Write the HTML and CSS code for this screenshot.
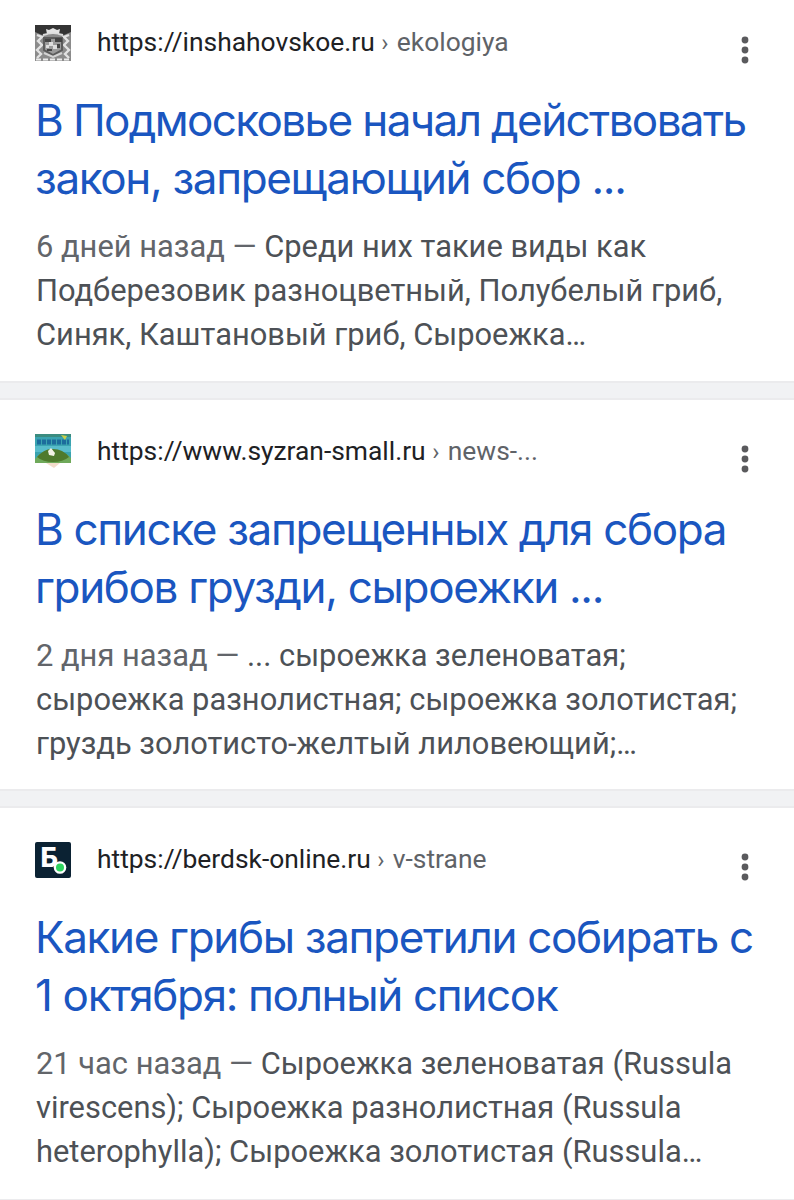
FILE: index.html
```
<!DOCTYPE html>
<html lang="ru">
<head>
  <meta charset="UTF-8">
  <meta name="viewport" content="width=device-width, initial-scale=1.0">
  <title>Результаты поиска</title>
  <link rel="stylesheet" href="styles.css">
</head>
<body>
  <main class="results">
    <article class="result">
      <header class="source">
        <svg class="favicon soft" viewBox="0 0 36 36">
          <rect width="36" height="36" fill="#8b8b8b"/>
          <path d="M0 0h36v7l-7 3H7L0 7z" fill="#343434"/>
          <path d="M11 4l3 1 4-2 4 2 3-1-1 5H12z" fill="#e4e4e4"/>
          <path d="M2 10l5 2-4 4 4 4-5 5 4 4-4 4M34 10l-5 2 4 4-4 4 5 5-4 4 4 4" fill="none" stroke="#e2e2e2" stroke-width="2.4"/>
          <path d="M8 10q10-3 20 0" fill="none" stroke="#ddd" stroke-width="2"/>
          <path d="M9 13h18v12l-9 5-9-5z" fill="#9a9a9a" stroke="#5c5c5c" stroke-width="2"/>
          <path d="M10 14h6v3h-6zM20 13h7v4h-7zM12 24h5v2h-5zM22 19h3v4h-3z" fill="#444"/>
          <path d="M14 17h4v4h-4zM18 20h4v4h-4zM11 20h3v3h-3z" fill="#ddd"/>
          <path d="M9 28l9 4 9-4" fill="none" stroke="#d4d4d4" stroke-width="2"/>
          <path d="M1 34.5h34" stroke="#ececec" stroke-width="2" stroke-dasharray="5 2"/>
        </svg>
        <div class="url">https://inshahovskoe.ru<span class="path"> <span class="sep">›</span> ekologiya</span></div>
        <svg class="menu" viewBox="0 0 8 28"><circle cx="4" cy="4" r="3.4"/><circle cx="4" cy="14" r="3.4"/><circle cx="4" cy="24" r="3.4"/></svg>
      </header>
      <h3 class="title"><span class="line tight">В Подмосковье начал действовать</span><span class="line">закон, запрещающий сбор ...</span></h3>
      <p class="snippet"><span class="line"><span class="date">6 дней назад —</span> Среди них такие виды как</span><span class="line">Подберезовик разноцветный, Полубелый гриб,</span><span class="line">Синяк, Каштановый гриб, Сыроежка…</span></p>
    </article>

    <article class="result">
      <header class="source">
        <svg class="favicon soft" viewBox="0 0 36 36">
          <rect width="36" height="29" fill="#3aa3b0"/>
          <rect width="36" height="3" fill="#3b8c80"/>
          <path d="M2 8h32" stroke="#1c6c9c" stroke-width="5" stroke-dasharray="4 1"/>
          <rect y="12" width="36" height="6" fill="#58bccb"/>
          <path d="M0 29v-4q8-10 18-9 10 0 18 8v5z" fill="#6fa95a"/>
          <path d="M2 23q8-9 16-8 10 0 16 8-6 5-16 5T2 23z" fill="#4f7a2c"/>
          <path d="M13 17l3-3 4 5-1 3-5-1z" fill="#f2f2e4"/>
          <path d="M26 1l6 1-2 4z" fill="#c8cf4a"/>
          <path d="M11 29h14l-6 5z" fill="#f3dccb"/>
        </svg>
        <div class="url">https://www.syzran-small.ru<span class="path"> <span class="sep">›</span> news-...</span></div>
        <svg class="menu" viewBox="0 0 8 28"><circle cx="4" cy="4" r="3.4"/><circle cx="4" cy="14" r="3.4"/><circle cx="4" cy="24" r="3.4"/></svg>
      </header>
      <h3 class="title"><span class="line">В списке запрещенных для сбора</span><span class="line">грибов грузди, сыроежки ...</span></h3>
      <p class="snippet"><span class="line"><span class="date">2 дня назад —</span> ... сыроежка зеленоватая;</span><span class="line">сыроежка разнолистная; сыроежка золотистая;</span><span class="line">груздь золотисто-желтый лиловеющий;…</span></p>
    </article>

    <article class="result">
      <header class="source">
        <svg class="favicon" viewBox="0 0 36 36">
          <rect width="36" height="36" rx="2" fill="#0b2233"/>
          <text class="favicon-letter" x="5.5" y="25">Б</text>
          <circle cx="25" cy="25.5" r="6.3" fill="#fff"/>
          <circle cx="25" cy="25.5" r="4" fill="#2fd45f"/>
        </svg>
        <div class="url">https://berdsk-online.ru<span class="path"> <span class="sep">›</span> v-strane</span></div>
        <svg class="menu" viewBox="0 0 8 28"><circle cx="4" cy="4" r="3.4"/><circle cx="4" cy="14" r="3.4"/><circle cx="4" cy="24" r="3.4"/></svg>
      </header>
      <h3 class="title"><span class="line">Какие грибы запретили собирать с</span><span class="line">1 октября: полный список</span></h3>
      <p class="snippet"><span class="line"><span class="date">21 час назад —</span> Сыроежка зеленоватая (Russula</span><span class="line">virescens); Сыроежка разнолистная (Russula</span><span class="line">heterophylla); Сыроежка золотистая (Russula…</span></p>
    </article>
  </main>
</body>
</html>
```
FILE: styles.css
```
* {
  box-sizing: border-box;
}

body {
  margin: 0;
  height: 1200px;
  overflow: hidden;
  background-color: #f1f2f4;
  font-family: Roboto, "Noto Sans", sans-serif;
}

.results {
  display: flex;
  flex-direction: column;
  gap: 15px;
}

.result {
  height: 393px;
  padding: 34px 36px 0;
  background-color: #fff;
  border-top: 2px solid #ebebed;
  border-bottom: 2px solid #ebebed;
}

.result:first-child {
  height: 383px;
  padding-top: 25px;
  border-top: none;
}

.result:last-child {
  height: 395px;
}

/* Favicon, address and overflow menu */
.source {
  display: flex;
  align-items: flex-start;
  height: 66px;
}

.favicon {
  width: 36px;
  height: 36px;
  margin-left: -1px;
  margin-right: 26px;
}

.favicon.soft {
  filter: blur(0.5px);
}

.favicon-letter {
  font: 800 27px Inter, sans-serif;
  fill: #fff;
}

.url {
  flex: 1;
  font-size: 26.4px;
  line-height: 34px;
  color: #202124;
}

.path {
  color: #5f6368;
}

.sep {
  display: inline-block;
  width: 9px;
  font-size: 24px;
  line-height: 1;
}

.menu {
  width: 8px;
  height: 28px;
  margin: 11px 9px 0 0;
  fill: #5a5a5d;
}

.title {
  margin: 0 0 0 -1px;
  font-family: Inter, sans-serif;
  font-size: 44px;
  font-weight: 400;
  line-height: 58px;
  letter-spacing: -1.34px;
  color: #1a56c0;
}

.title .tight {
  letter-spacing: -1.62px;
}

.line {
  display: block;
  white-space: nowrap;
}

.snippet {
  margin: 18px 0 0;
  font-size: 30.85px;
  line-height: 44px;
  color: #4d5156;
}

.date {
  color: #62656a;
}
```
